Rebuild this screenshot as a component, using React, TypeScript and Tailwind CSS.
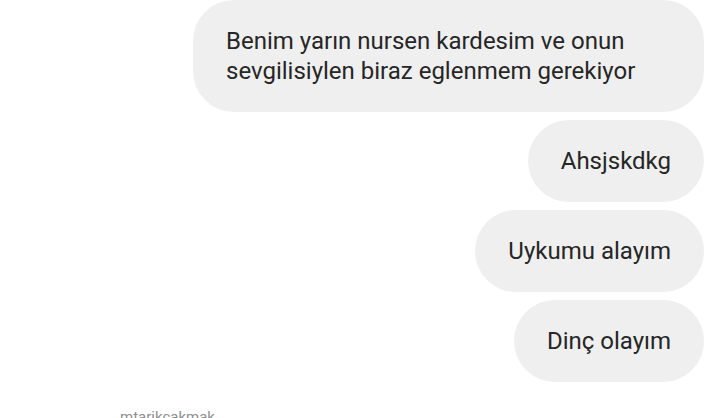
const messages = [
  "Benim yarın nursen kardesim ve onun sevgilisiylen biraz eglenmem gerekiyor",
  "Ahsjskdkg",
  "Uykumu alayım",
  "Dinç olayım",
];

export default function App() {
  return (
    <div className="w-[720px] h-[418px] overflow-hidden bg-white font-['Roboto',sans-serif]">
      <div className="flex flex-col items-end gap-[8px] pr-[16px]">
        {messages.map((m, i) => (
          <div
            key={i}
            className="max-w-[511px] rounded-[41px] bg-[#efefef] px-[33px] py-[26px] text-[24px] leading-[30px] text-[#262626]"
          >
            {m}
          </div>
        ))}
      </div>
      <div className="mt-[26px] pl-[120px] text-[15px] leading-[18px] text-[#8e8e8e]">mtarikcakmak</div>
    </div>
  );
}
